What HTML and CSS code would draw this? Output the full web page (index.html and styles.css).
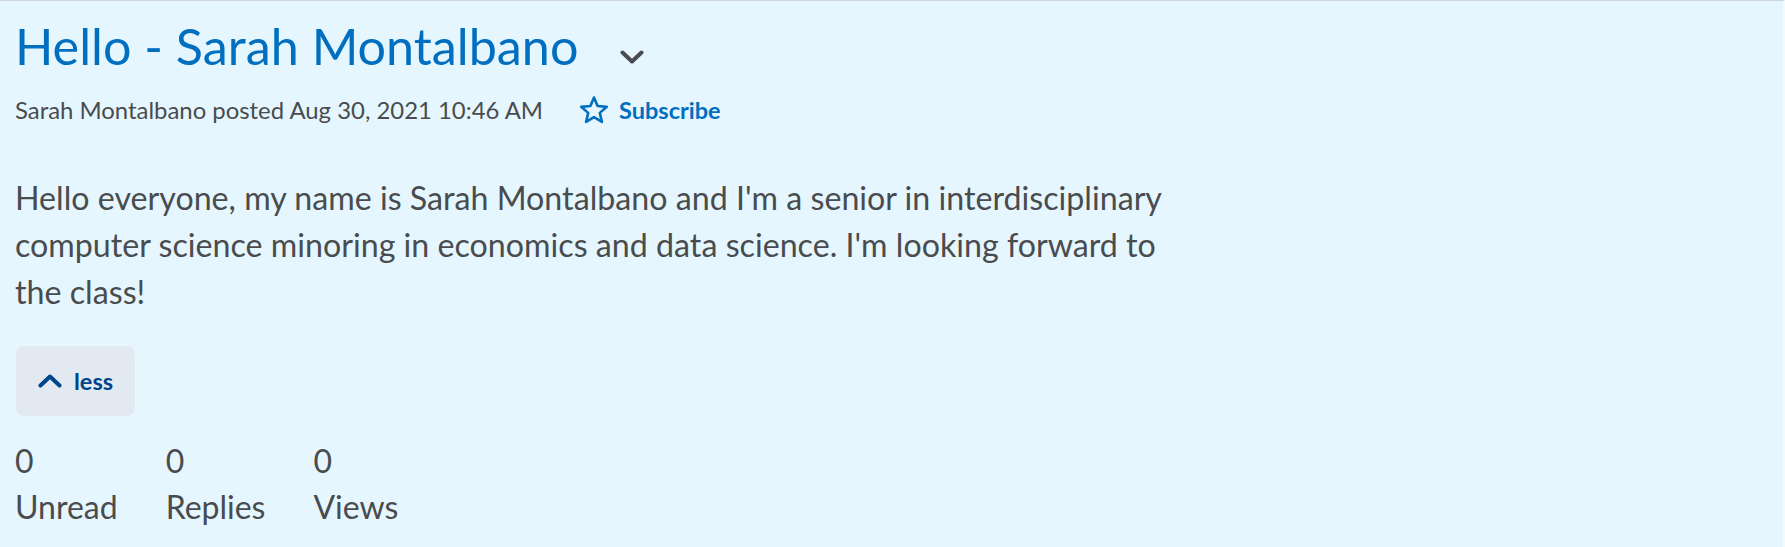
FILE: index.html
```html
<!DOCTYPE html>
<html>
<head>
<meta charset="utf-8">
<link rel="stylesheet" href="styles.css">
</head>
<body>
<div class="post">
  <div class="title-row">
    <h1 class="title">Hello - Sarah Montalbano</h1>
    <button class="caret" aria-label="Actions">
      <svg width="24" height="14" viewBox="0 0 24 14"><path d="M2.5 2.5 L12 11.5 L21.5 2.5" fill="none" stroke="#494c4e" stroke-width="4" stroke-linecap="round" stroke-linejoin="round"/></svg>
    </button>
  </div>
  <div class="meta">
    <span class="meta-text">Sarah Montalbano posted Aug 30, 2021 10:46 AM</span>
    <a class="subscribe" href="#">
      <svg width="30" height="29" viewBox="0 0 30 29"><path d="M15 2.5 L18.59 11.07 L27.84 11.83 L20.8 17.88 L22.94 26.92 L15 22.1 L7.06 26.92 L9.2 17.88 L2.16 11.83 L11.41 11.07 Z" fill="none" stroke="#006fbf" stroke-width="2.6" stroke-linejoin="round"/></svg>
      <span>Subscribe</span>
    </a>
  </div>
  <p class="body">Hello everyone, my name is Sarah Montalbano and I'm a senior in interdisciplinary computer science minoring in economics and data science. I'm looking forward to the class!</p>
  <button class="less">
    <svg width="24" height="14" viewBox="0 0 24 14"><path d="M2.5 11.5 L12 2.5 L21.5 11.5" fill="none" stroke="#004489" stroke-width="4" stroke-linecap="round" stroke-linejoin="round"/></svg>
    <span>less</span>
  </button>
  <div class="stats">
    <div class="stat"><div class="num">0</div><div class="label">Unread</div></div>
    <div class="stat"><div class="num">0</div><div class="label">Replies</div></div>
    <div class="stat"><div class="num">0</div><div class="label">Views</div></div>
  </div>
</div>
</body>
</html>
```
FILE: styles.css
```css
html, body {
  margin: 0;
  padding: 0;
}
body {
  font-family: Lato, "Open Sans", sans-serif;
  background: #e6f6ff;
}
.post {
  box-sizing: border-box;
  height: 547px;
  background: #e6f6ff;
  border-top: 1px solid #cdd3d9;
  border-right: 2px solid #f2fbff;
  padding: 0 15px;
  color: #494c4e;
}
.title-row {
  display: flex;
  align-items: center;
  padding-top: 15px;
}
.title {
  margin: 0;
  font-weight: 400;
  font-size: 50.3px;
  line-height: 60px;
  color: #006fbf;
}
.caret {
  background: none;
  border: 0;
  padding: 0;
  margin-left: 42px;
  margin-top: 21px;
  display: flex;
}
.meta {
  display: flex;
  align-items: center;
  margin-top: 19px;
}
.meta-text {
  font-size: 23.9px;
  color: #494c4e;
}
.subscribe {
  display: flex;
  align-items: center;
  gap: 10px;
  margin-left: 36px;
  text-decoration: none;
  color: #006fbf;
  font-weight: 700;
  font-size: 23.5px;
}
.body {
  margin: 50px 0 0;
  max-width: 1165px;
  font-size: 32.2px;
  line-height: 47px;
}
.less {
  display: flex;
  align-items: center;
  gap: 12px;
  margin: 31px 0 0 1px;
  width: 119px;
  height: 70px;
  padding: 0 0 0 22px;
  border: 0;
  border-radius: 8px;
  background: #e3e9f1;
  color: #004489;
  font-family: Lato, sans-serif;
  font-weight: 700;
  font-size: 23.5px;
}
.stats {
  display: flex;
  gap: 48px;
  margin-top: 22px;
}
.stat {
  font-size: 32px;
  line-height: 46px;
}
```
